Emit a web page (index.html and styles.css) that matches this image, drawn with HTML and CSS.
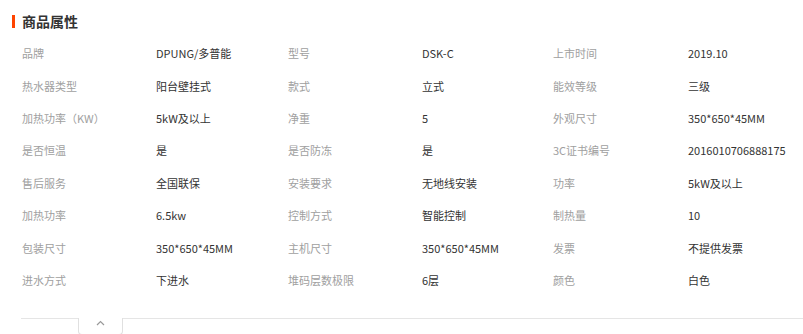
FILE: index.html
```html
<!DOCTYPE html>
<html>
<head>
<meta charset="utf-8">
<link rel="stylesheet" href="styles.css">
</head>
<body>
<div class="panel">
  <div class="title"><span class="bar"></span><span class="title-text">商品属性</span></div>
  <div class="attrs">
    <div class="k">品牌</div><div class="v">DPUNG/多普能</div>
    <div class="k">型号</div><div class="v">DSK-C</div>
    <div class="k">上市时间</div><div class="v">2019.10</div>

    <div class="k">热水器类型</div><div class="v">阳台壁挂式</div>
    <div class="k">款式</div><div class="v">立式</div>
    <div class="k">能效等级</div><div class="v">三级</div>

    <div class="k">加热功率（KW）</div><div class="v">5kW及以上</div>
    <div class="k">净重</div><div class="v">5</div>
    <div class="k">外观尺寸</div><div class="v">350*650*45MM</div>

    <div class="k">是否恒温</div><div class="v">是</div>
    <div class="k">是否防冻</div><div class="v">是</div>
    <div class="k">3C证书编号</div><div class="v">2016010706888175</div>

    <div class="k">售后服务</div><div class="v">全国联保</div>
    <div class="k">安装要求</div><div class="v">无地线安装</div>
    <div class="k">功率</div><div class="v">5kW及以上</div>

    <div class="k">加热功率</div><div class="v">6.5kw</div>
    <div class="k">控制方式</div><div class="v">智能控制</div>
    <div class="k">制热量</div><div class="v">10</div>

    <div class="k">包装尺寸</div><div class="v">350*650*45MM</div>
    <div class="k">主机尺寸</div><div class="v">350*650*45MM</div>
    <div class="k">发票</div><div class="v">不提供发票</div>

    <div class="k">进水方式</div><div class="v">下进水</div>
    <div class="k">堆码层数极限</div><div class="v">6层</div>
    <div class="k">颜色</div><div class="v">白色</div>
  </div>
  <div class="foot">
    <div class="foot-line short"></div>
    <div class="tab">
      <svg width="9" height="6" viewBox="0 0 9 6"><path d="M1 5 L4.5 1.5 L8 5" fill="none" stroke="#999" stroke-width="1.2"/></svg>
    </div>
    <div class="foot-line long"></div>
  </div>
</div>
</body>
</html>
```
FILE: styles.css
```css
html, body {
  margin: 0;
  padding: 0;
  background: #fff;
}
body {
  font-family: "Noto Sans CJK SC", "Noto Sans", sans-serif;
  font-size: 11px;
  color: #333;
}
.panel {
  width: 803px;
  height: 334px;
  overflow: hidden;
}
.title {
  display: flex;
  align-items: center;
  height: 20px;
  margin-top: 11px;
  padding-left: 12px;
}
.bar {
  width: 3px;
  height: 13px;
  background: #ff4400;
  margin-right: 7px;
}
.title-text {
  font-size: 14px;
  font-weight: bold;
  color: #333;
  line-height: 20px;
}
.attrs {
  display: grid;
  grid-template-columns: 134px 132px 134px 131px 135px 1fr;
  grid-auto-rows: 32.4px;
  align-items: center;
  margin-left: 22px;
  margin-top: 6px;
}
.k {
  color: #a0a0a0;
  white-space: nowrap;
}
.v {
  color: #333;
  white-space: nowrap;
}
.foot {
  display: flex;
  align-items: flex-start;
  margin-top: 22px;
  margin-left: 21px;
}
.foot-line {
  height: 1px;
  background: #e5e5e5;
}
.foot-line.short {
  width: 57px;
}
.foot-line.long {
  flex: 1;
}
.tab {
  width: 43px;
  height: 14px;
  border: 1px solid #e0e0e0;
  border-top: none;
  border-radius: 0 0 4px 4px;
  display: flex;
  justify-content: center;
  padding-top: 2px;
  box-sizing: content-box;
}
.tab svg {
  display: block;
}
```
